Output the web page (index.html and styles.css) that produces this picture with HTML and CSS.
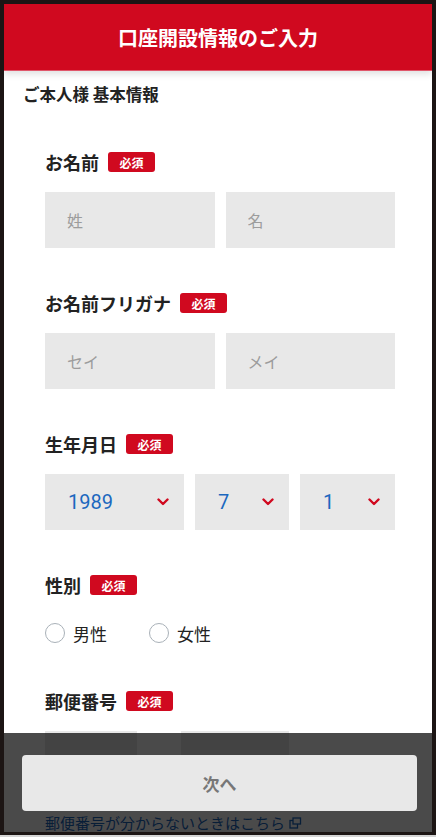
FILE: index.html
```html
<!DOCTYPE html>
<html lang="ja">
<head>
    <meta charset="UTF-8">
    <meta name="viewport" content="width=device-width, initial-scale=1.0">
    <title>口座開設情報のご入力</title>
    <link rel="stylesheet" href="styles.css">
</head>
<body>
    <div class="screen">
        <header class="app-header">口座開設情報のご入力</header>

        <h2 class="section-title">ご本人様 基本情報</h2>

        <form class="form">
            <div class="field">
                <div class="field-label">お名前 <span class="badge">必須</span></div>
                <div class="field-body input-pair">
                    <input class="text-input" type="text" placeholder="姓">
                    <input class="text-input" type="text" placeholder="名">
                </div>
            </div>

            <div class="field">
                <div class="field-label">お名前フリガナ <span class="badge">必須</span></div>
                <div class="field-body input-pair">
                    <input class="text-input" type="text" placeholder="セイ">
                    <input class="text-input" type="text" placeholder="メイ">
                </div>
            </div>

            <div class="field">
                <div class="field-label">生年月日 <span class="badge">必須</span></div>
                <div class="field-body date-row">
                    <div class="select">
                        <span class="select-value">1989</span>
                        <svg class="chevron" width="12" height="8" viewBox="0 0 12 8"><polyline points="1.5,1.5 6,6 10.5,1.5" fill="none" stroke="#d0091f" stroke-width="2.4" stroke-linecap="round" stroke-linejoin="round"/></svg>
                    </div>
                    <div class="select">
                        <span class="select-value">7</span>
                        <svg class="chevron" width="12" height="8" viewBox="0 0 12 8"><polyline points="1.5,1.5 6,6 10.5,1.5" fill="none" stroke="#d0091f" stroke-width="2.4" stroke-linecap="round" stroke-linejoin="round"/></svg>
                    </div>
                    <div class="select">
                        <span class="select-value">1</span>
                        <svg class="chevron" width="12" height="8" viewBox="0 0 12 8"><polyline points="1.5,1.5 6,6 10.5,1.5" fill="none" stroke="#d0091f" stroke-width="2.4" stroke-linecap="round" stroke-linejoin="round"/></svg>
                    </div>
                </div>
            </div>

            <div class="field field-gender">
                <div class="field-label">性別 <span class="badge">必須</span></div>
                <div class="radio-row">
                    <label class="radio"><span class="radio-circle"></span>男性</label>
                    <label class="radio"><span class="radio-circle"></span>女性</label>
                </div>
            </div>

            <div class="field">
                <div class="field-label">郵便番号 <span class="badge">必須</span></div>
                <div class="field-body zip-row">
                    <input class="text-input zip-first" type="text">
                    <span class="zip-sep">-</span>
                    <input class="text-input zip-second" type="text">
                </div>
                <a class="zip-link" href="#">郵便番号が分からないときはこちら
                    <svg width="13" height="12" viewBox="0 0 13 12"><rect x="1" y="3.5" width="7.5" height="7.5" fill="none" stroke="currentColor" stroke-width="1.3"/><rect x="4" y="1" width="7.5" height="6" fill="#fff" stroke="currentColor" stroke-width="1.3"/></svg>
                </a>
            </div>
        </form>

        <div class="bottom-bar">
            <button class="next-btn" type="button">次へ</button>
        </div>
    </div>
    <div class="screen-edge"></div>
</body>
</html>
```

FILE: styles.css
```css
body {
    margin: 0;
    width: 436px;
    height: 837px;
    overflow: hidden;
    background-color: #1c1514;
    font-family: "Noto Sans CJK JP", "Noto Sans", sans-serif;
    color: #222;
}
.screen {
    position: relative;
    margin: 4px 4px 0;
    height: 828px;
    overflow: hidden;
    background: #fff;
}
.screen-edge {
    margin-top: 3px;
    height: 2px;
    background: #d4d4d4;
}
.app-header {
    position: relative;
    z-index: 1;
    height: 67px;
    display: flex;
    align-items: center;
    justify-content: center;
    background-color: #d0091f;
    border-bottom: 1px solid #e0566a;
    box-sizing: border-box;
    color: #fff;
    font-size: 20px;
    font-weight: 700;
    box-shadow: 0 3px 7px rgba(0,0,0,0.13);
}
.section-title {
    margin: 11px 0 0 19px;
    font-size: 16.5px;
    line-height: 24px;
    font-weight: 700;
}
.form {
    margin-top: 44px;
    padding: 0 37px 0 41px;
}
.field + .field {
    margin-top: 43px;
}
.field-label {
    display: flex;
    align-items: center;
    gap: 9px;
    height: 24px;
    font-size: 18px;
    font-weight: 700;
}
.badge {
    display: flex;
    align-items: center;
    justify-content: center;
    width: 47px;
    height: 20px;
    border-radius: 3px;
    background-color: #d0091f;
    color: #fff;
    font-size: 12px;
    font-weight: 700;
}
.field-body {
    margin-top: 18px;
}
.input-pair {
    display: grid;
    grid-template-columns: 1fr 1fr;
    gap: 11px;
}
.text-input {
    height: 56px;
    width: 100%;
    box-sizing: border-box;
    border: none;
    border-radius: 0;
    padding: 0 22px;
    background: #e8e8e8;
    font-family: inherit;
    font-size: 16px;
    color: #222;
    outline: none;
}
.text-input::placeholder {
    color: #9c9c9c;
}
.date-row {
    display: grid;
    grid-template-columns: 139px 94px 1fr;
    gap: 11px;
}
.select {
    height: 56px;
    display: flex;
    align-items: center;
    padding: 0 15px 0 23px;
    background: #e8e8e8;
}
.select-value {
    font-family: Roboto, "Noto Sans", sans-serif;
    font-size: 20px;
    color: #1c68bf;
}
.chevron {
    margin-left: auto;
}
.radio-row {
    display: flex;
    align-items: center;
    height: 26px;
    margin-top: 23px;
    font-size: 17px;
}
.radio {
    display: flex;
    align-items: center;
    gap: 8px;
    margin-right: 42px;
}
.radio-circle {
    width: 20px;
    height: 20px;
    box-sizing: border-box;
    border: 1.5px solid #a9b1b8;
    border-radius: 50%;
    background: #fff;
}
.zip-row {
    display: flex;
    align-items: center;
}
.zip-first {
    width: 92px;
}
.zip-second {
    width: 108px;
}
.zip-sep {
    width: 44px;
    text-align: center;
    color: #888;
}
.zip-link {
    display: flex;
    align-items: center;
    gap: 4px;
    margin-top: 25px;
    font-size: 15px;
    line-height: 22px;
    color: #1c68bf;
    text-decoration: none;
}
.bottom-bar {
    position: absolute;
    left: 0;
    right: 0;
    bottom: 0;
    z-index: 2;
    height: 99px;
    box-sizing: border-box;
    padding: 22px 15px 0 18px;
    background: rgba(0,0,0,0.71);
}
.next-btn {
    display: block;
    width: 100%;
    height: 56px;
    border: none;
    border-radius: 4px;
    background: #e8e8e8;
    font-family: inherit;
    font-size: 17px;
    font-weight: 700;
    color: #777;
}
```
